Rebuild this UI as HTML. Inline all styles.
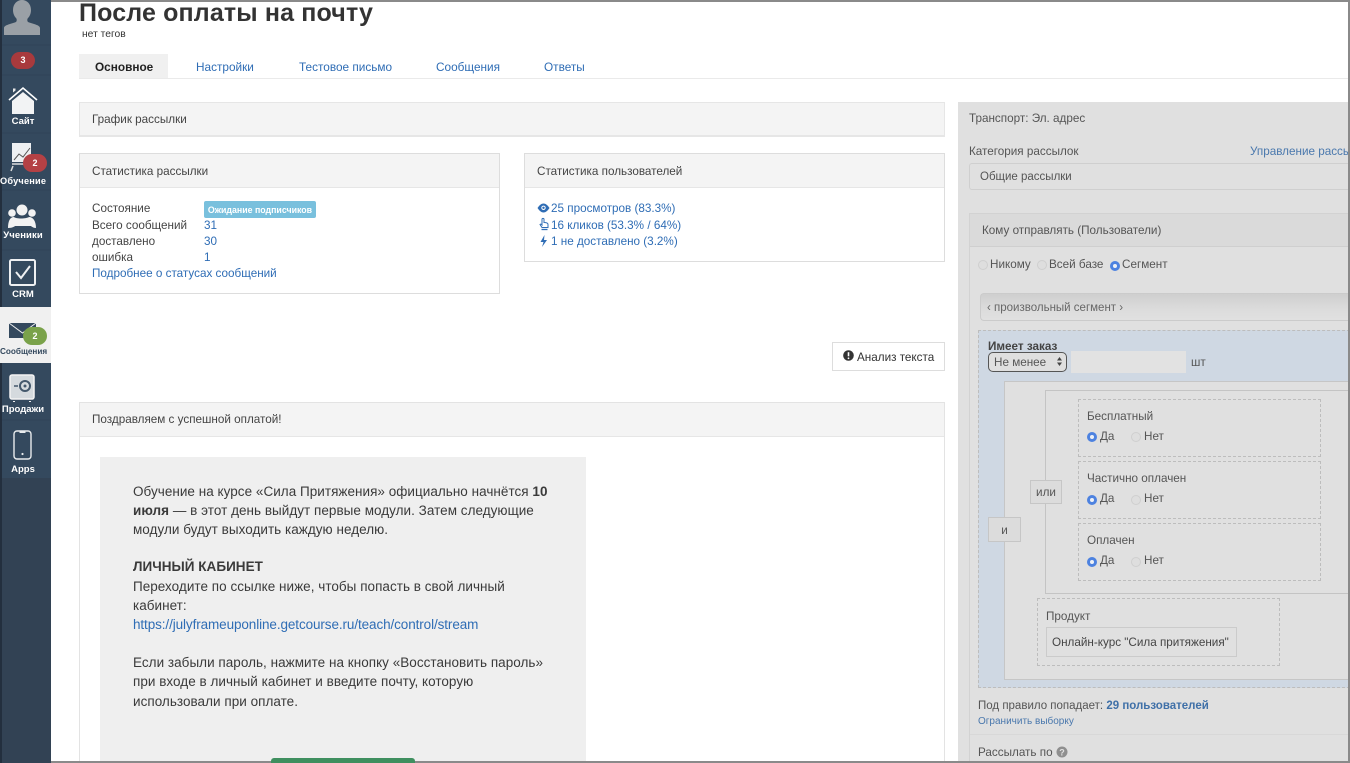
<!DOCTYPE html>
<html lang="ru"><head><meta charset="utf-8"><title>После оплаты на почту</title>
<style>
html,body{margin:0;padding:0;background:#fff;width:1350px;height:763px;overflow:hidden}
#p{position:relative;width:1350px;height:763px;overflow:hidden;background:#fff;font-family:"Liberation Sans",sans-serif;font-size:11.7px;color:#444}
#p div,#p span.a,#p a.a{position:absolute;white-space:nowrap}
a{color:#2f6db5;text-decoration:none}
.b{box-sizing:border-box}
.r{width:10px;height:10px;border-radius:50%;border:1px solid #cfcfcf;background:#dedede;box-sizing:border-box}
.s{width:10px;height:10px;border-radius:50%;border:3px solid #4d82e0;background:#eef1f6;box-sizing:border-box}
.n{color:#fff;font-weight:bold;font-size:9.5px;text-align:center;left:0;width:46px}
.g{color:#555}
.dash{border:1px dashed #bdbdbd;box-sizing:border-box}
.em{font-size:13.5px;color:#3a3a3a;left:133px;letter-spacing:.03px}
.t{font-size:11.8px}
</style></head><body><div id="p">

<!-- sidebar -->
<div style="left:0;top:0;width:51px;height:763px;background:#34495e"></div>
<div style="left:0;top:478px;width:51px;height:285px;background:#324254"></div>
<div style="left:0;top:0;width:1.500px;height:763px;background:#232f3e"></div>
<div style="left:0;top:307px;width:51px;height:56px;background:#f0f0f0"></div>
<svg style="position:absolute;left:0;top:0" width="51" height="480" viewBox="0 0 51 480">
<path d="M4 35V28c0-3 7-4 12-6 1-1 1-3 0-4-2-2-3-5-3-8 0-6 4-10 9-10s9 4 9 10c0 3-1 6-3 8-1 1-1 3 0 4 5 2 12 3 12 6v7z" fill="#9aa0a6"/>
<g stroke="#2e4155" stroke-width="1" opacity=".6"><path d="M2 45H51M2 75H51M2 133H51M2 190H51M2 250H51M2 420H51"/></g>
<path d="M9 100 23 88 37 100" fill="none" stroke="#fff" stroke-width="1.600"/>
<path d="M12 101 23 92 34 101V114H12z" fill="#f2f3f4"/><path d="M13 88.500h2.500v2l-2.500 2z" fill="#e8e8e8"/>
<path d="M12 143H31V162H12z" fill="#eef0f2"/><path d="M14 160 19 154 23 157 30 148" fill="none" stroke="#555" stroke-width="1"/><path d="M13 166 11 171M30 166 32 171M12 164H31" stroke="#ddd" stroke-width="1.500"/>
<circle cx="22" cy="210" r="5.500" fill="#f2f2f2"/><circle cx="12" cy="213" r="3.800" fill="#f2f2f2"/><circle cx="32" cy="213" r="3.800" fill="#f2f2f2"/>
<path d="M8 228c0-7 2-11 6-11 2 2 12 2 15 0 4 0 7 4 7 11-3 0-5-2-5-2H15s-2 2-7 2z" fill="#f2f2f2"/>
<rect x="10" y="260" width="25" height="25" rx="1.500" fill="#34495e" stroke="#eef0f2" stroke-width="2"/><path d="M16 272 21 278 30 266" fill="none" stroke="#eef0f2" stroke-width="2"/>
<path d="M9 323H36V338H9z" fill="#34495e"/><path d="M9 323 22.500 333 36 323" fill="none" stroke="#f0f0f0" stroke-width="1"/>
<rect x="10" y="375" width="24" height="24" rx="2" fill="#d5dade" stroke="#f3f3f3" stroke-width="1.500"/><circle cx="25" cy="386" r="5" fill="none" stroke="#44586c" stroke-width="2"/><circle cx="25" cy="386" r="1.500" fill="#44586c"/><path d="M14 386h4" stroke="#44586c" stroke-width="1.500"/><path d="M14 401v1M30 401v1" stroke="#eee" stroke-width="2"/>
<rect x="14" y="431" width="17" height="28" rx="3" fill="none" stroke="#e9ecee" stroke-width="1.400"/><path d="M19.500 432h6" stroke="#e9ecee" stroke-width="2"/><circle cx="22.500" cy="454" r="1.100" fill="#e9ecee"/>
</svg>
<div style="left:11px;top:52px;width:24px;height:17px;border-radius:9px;background:#a83a3d;color:#fff;font-size:9px;font-weight:bold;text-align:center;line-height:17px">3</div>
<div style="left:23px;top:154px;width:24px;height:18px;border-radius:9px;background:#b44145;color:#fff;font-size:9px;font-weight:bold;text-align:center;line-height:18px">2</div>
<div style="left:23px;top:327px;width:24px;height:18px;border-radius:9px;background:#7aa24a;color:#fff;font-size:9px;font-weight:bold;text-align:center;line-height:18px">2</div>
<div class="n" style="top:116px">Сайт</div>
<div class="n" style="top:176px;font-size:9.200px;letter-spacing:.2px">Обучение</div>
<div class="n" style="top:230px;letter-spacing:.1px">Ученики</div>
<div class="n" style="top:289px">CRM</div>
<div class="n" style="top:347px;font-size:8.200px;color:#34495e">Сообщения</div>
<div class="n" style="top:404px">Продажи</div>
<div class="n" style="top:464px">Apps</div>

<!-- header -->
<div style="left:79px;top:-3px;font-size:25px;font-weight:bold;color:#333;letter-spacing:.15px;line-height:32px">После оплаты на почту</div>
<div style="left:82px;top:29px;font-size:10.300px;color:#333;line-height:12px">нет тегов</div>
<div style="left:79px;top:54px;width:89px;height:24px;background:#f0f0f0"></div>
<div style="left:79px;top:78px;width:1271px;height:1px;background:#eaeaea"></div>
<div class="t" style="left:95px;top:59px;font-weight:bold;color:#222;line-height:16px">Основное</div>
<a class="a t" style="left:196px;top:59px;line-height:16px">Настройки</a>
<a class="a t" style="left:299px;top:59px;line-height:16px">Тестовое письмо</a>
<a class="a t" style="left:436px;top:59px;line-height:16px">Сообщения</a>
<a class="a t" style="left:544px;top:59px;line-height:16px">Ответы</a>

<!-- График -->
<div class="b" style="left:79px;top:102px;width:866px;height:35px;background:#f4f4f4;border:1px solid #e6e6e6;border-bottom-width:2px"></div>
<div style="left:92px;top:112px;line-height:16px">График рассылки</div>

<!-- Статистика рассылки -->
<div class="b" style="left:79px;top:153px;width:421px;height:141px;border:1px solid #ddd"></div>
<div class="b" style="left:80px;top:154px;width:419px;height:34px;background:#f4f4f4;border-bottom:1px solid #e6e6e6"></div>
<div style="left:92px;top:164px;line-height:16px">Статистика рассылки</div>
<div style="left:92px;top:201px;line-height:16px">Состояние</div>
<div style="left:92px;top:218px;line-height:16px">Всего сообщений</div>
<div style="left:92px;top:234px;line-height:16px">доставлено</div>
<div style="left:92px;top:250px;line-height:16px">ошибка</div>
<a class="a" style="left:92px;top:266px;line-height:16px">Подробнее о статусах сообщений</a>
<div style="left:204px;top:201px;width:112px;height:17px;border-radius:2px;background:#79c0dd;color:#fff;font-size:8.800px;font-weight:bold;text-align:center;line-height:18px">Ожидание подписчиков</div>
<a class="a" style="left:204px;top:218px;line-height:16px">31</a>
<a class="a" style="left:204px;top:234px;line-height:16px">30</a>
<a class="a" style="left:204px;top:250px;line-height:16px">1</a>

<!-- Статистика пользователей -->
<div class="b" style="left:524px;top:153px;width:421px;height:109px;border:1px solid #ddd"></div>
<div class="b" style="left:525px;top:154px;width:419px;height:34px;background:#f4f4f4;border-bottom:1px solid #e6e6e6"></div>
<div style="left:537px;top:164px;line-height:16px">Статистика пользователей</div>
<svg style="position:absolute;left:537px;top:202px" width="14" height="48" viewBox="0 0 14 48">
<path d="M.5 6C2.500 3 4.500 1.500 6.500 1.500S10.500 3 12.500 6C10.500 9 8.500 10.500 6.500 10.500S2.500 9 .5 6z" fill="#2f6db5"/><circle cx="6.500" cy="5.800" r="2.200" fill="#fff"/><circle cx="6.500" cy="5.800" r="1.200" fill="#2f6db5"/>
<path d="M5 17.500c0-1.500 2-1.500 2 0v3c2 0 4 .5 4 2v3H5L3 22.500c1-1 1.500 0 2 .5z" fill="none" stroke="#2f6db5" stroke-width="1"/><path d="M4.500 27.500h6" stroke="#2f6db5" stroke-width="1.300"/>
<path d="M7.500 33 3.500 40H6.500L5 45 10 38H7z" fill="#2f6db5"/></svg>
<a class="a" style="left:551px;top:201px;line-height:16px">25 просмотров (83.3%)</a>
<a class="a" style="left:551px;top:218px;line-height:16px">16 кликов (53.3% / 64%)</a>
<a class="a" style="left:551px;top:234px;line-height:16px">1 не доставлено (3.2%)</a>

<!-- Анализ -->
<div class="b" style="left:832px;top:342px;width:113px;height:29px;border:1px solid #ddd;background:#fff"></div>
<svg style="position:absolute;left:843px;top:350px" width="11" height="11" viewBox="0 0 11 11"><circle cx="5.500" cy="5.500" r="5.300" fill="#333"/><path d="M5.500 2.200V6.300" stroke="#fff" stroke-width="1.600"/><circle cx="5.500" cy="8.300" r=".9" fill="#fff"/></svg>
<div style="left:857px;top:350px;color:#333;line-height:16px">Анализ текста</div>

<!-- Письмо -->
<div class="b" style="left:79px;top:402px;width:866px;height:361px;border:1px solid #e3e3e3;border-bottom:0"></div>
<div class="b" style="left:80px;top:403px;width:864px;height:34px;background:#f4f4f4;border-bottom:1px solid #e6e6e6"></div>
<div style="left:92px;top:412px;line-height:16px">Поздравляем с успешной оплатой!</div>
<div style="left:100px;top:457px;width:486px;height:306px;background:#efefef"></div>
<div class="em" style="top:483px;line-height:18px">Обучение на курсе «Сила Притяжения» официально начнётся <b>10</b></div>
<div class="em" style="top:502px;line-height:18px"><b>июля</b> — в этот день выйдут первые модули. Затем следующие</div>
<div class="em" style="top:521px;line-height:18px">модули будут выходить каждую неделю.</div>
<div class="em" style="top:558px;line-height:18px;font-weight:bold">ЛИЧНЫЙ КАБИНЕТ</div>
<div class="em" style="top:578px;line-height:18px">Переходите по ссылке ниже, чтобы попасть в свой личный</div>
<div class="em" style="top:597px;line-height:18px">кабинет:</div>
<a class="a em" style="top:616px;line-height:18px;color:#2f6db5;letter-spacing:-.1px">https://julyframeuponline.getcourse.ru/teach/control/stream</a>
<div class="em" style="top:654px;line-height:18px">Если забыли пароль, нажмите на кнопку «Восстановить пароль»</div>
<div class="em" style="top:673px;line-height:18px">при входе в личный кабинет и введите почту, которую</div>
<div class="em" style="top:693px;line-height:18px">использовали при оплате.</div>

<!-- right panel -->
<div style="left:958px;top:102px;width:392px;height:661px;background:#e0e0e0"></div>
<div class="g" style="left:969px;top:111px;line-height:16px">Транспорт: Эл. адрес</div>
<div class="g" style="left:969px;top:144px;line-height:16px">Категория рассылок</div>
<div style="left:1250px;top:144px;width:100px;height:16px;overflow:hidden"><a style="line-height:16px;color:#4a78ad">Управление рассылками</a></div>
<div class="b" style="left:969px;top:163px;width:381px;height:27px;border:1px solid #cfcfcf;border-right:0;border-radius:3px 0 0 3px"></div>
<div class="g" style="left:980px;top:170px;font-size:11.500px;line-height:14px">Общие рассылки</div>

<div class="b" style="left:969px;top:213px;width:381px;height:550px;border:1px solid #d2d2d2;border-right:0;border-bottom:0"></div>
<div class="b" style="left:970px;top:214px;width:380px;height:33px;background:#dadada;border-bottom:1px solid #cfcfcf"></div>
<div class="g" style="left:982px;top:223px;line-height:16px">Кому отправлять (Пользователи)</div>
<div class="r" style="left:978px;top:260px"></div><div class="g" style="left:990px;top:257px;line-height:16px">Никому</div>
<div class="r" style="left:1037px;top:260px"></div><div class="g" style="left:1049px;top:257px;line-height:16px">Всей базе</div>
<div class="s" style="left:1110px;top:261px"></div><div class="g" style="left:1122px;top:257px;line-height:16px">Сегмент</div>

<div class="b" style="left:980px;top:293px;width:370px;height:28px;border:1px solid #cbcbcb;border-right:0;border-radius:4px 0 0 4px;background:linear-gradient(#cfcfcf,#dcdcdc 60%,#e0e0e0)"></div>
<div class="g" style="left:987px;top:301px;font-size:11.500px;line-height:14px;color:#666">‹ произвольный сегмент ›</div>

<div class="dash" style="left:978px;top:330px;width:372px;height:358px;background:#cfd8e3;border-right:0"></div>
<div style="left:988px;top:339px;font-weight:bold;color:#444;line-height:15px">Имеет заказ</div>
<div class="b" style="left:988px;top:352px;width:79px;height:20px;border:1px solid #555;border-radius:5px;background:#dfdfdf"></div>
<div class="g" style="left:994px;top:355px;line-height:16px">Не менее</div>
<svg style="position:absolute;left:1056px;top:356px" width="7" height="11" viewBox="0 0 7 11"><path d="M3.500 1 6 4.500H1zM3.500 10 6 6.500H1z" fill="#444"/></svg>
<div style="left:1071px;top:351px;width:115px;height:22px;background:#e2e2e2"></div>
<div class="g" style="left:1191px;top:355px;line-height:16px">шт</div>

<div class="b" style="left:1004px;top:381px;width:346px;height:299px;background:#e0e0e0;border:1px solid #c6c6c6;border-right:0"></div>
<div class="b" style="left:1045px;top:390px;width:305px;height:204px;border:1px solid #c4c4c4;border-right:0"></div>
<div class="dash" style="left:1078px;top:399px;width:243px;height:58px"></div>
<div class="dash" style="left:1078px;top:461px;width:243px;height:58px"></div>
<div class="dash" style="left:1078px;top:523px;width:243px;height:58px"></div>
<div class="g" style="left:1087px;top:409px;line-height:16px">Бесплатный</div>
<div class="s" style="left:1087px;top:432px"></div><div class="g" style="left:1100px;top:429px;line-height:16px">Да</div>
<div class="r" style="left:1131px;top:432px"></div><div class="g" style="left:1144px;top:429px;line-height:16px">Нет</div>
<div class="g" style="left:1087px;top:471px;line-height:16px">Частично оплачен</div>
<div class="s" style="left:1087px;top:495px"></div><div class="g" style="left:1100px;top:491px;line-height:16px">Да</div>
<div class="r" style="left:1131px;top:495px"></div><div class="g" style="left:1144px;top:491px;line-height:16px">Нет</div>
<div class="g" style="left:1087px;top:533px;line-height:16px">Оплачен</div>
<div class="s" style="left:1087px;top:557px"></div><div class="g" style="left:1100px;top:553px;line-height:16px">Да</div>
<div class="r" style="left:1131px;top:557px"></div><div class="g" style="left:1144px;top:553px;line-height:16px">Нет</div>
<div class="b g" style="left:1030px;top:480px;width:32px;height:24px;background:#dcdcdc;border:1px solid #c6c6c6;text-align:center;line-height:23px">или</div>
<div class="b g" style="left:988px;top:517px;width:33px;height:25px;background:#dcdcdc;border:1px solid #c6c6c6;text-align:center;line-height:25px">и</div>
<div class="dash" style="left:1037px;top:598px;width:243px;height:68px"></div>
<div class="g" style="left:1046px;top:609px;line-height:16px">Продукт</div>
<div class="b" style="left:1046px;top:627px;width:191px;height:30px;border:1px solid #cbcbcb;color:#444;padding-left:5px;line-height:29px">Онлайн-курс "Сила притяжения"</div>

<div class="g" style="left:978px;top:698px;font-size:11.500px;line-height:16px">Под правило попадает: <b style="color:#3f70a8">29 пользователей</b></div>
<a class="a" style="left:978px;top:716px;font-size:10px;line-height:12px;color:#4a78ad">Ограничить выборку</a>
<div style="left:970px;top:734px;width:380px;height:1px;background:#d8d8d8"></div>
<div class="g" style="left:978px;top:745px;line-height:16px">Рассылать по</div>
<svg style="position:absolute;left:1056px;top:746px" width="12" height="12" viewBox="0 0 12 12"><circle cx="6" cy="6" r="5.500" fill="#8f8f8f"/><text x="6" y="9.300" font-size="9" font-weight="bold" text-anchor="middle" fill="#e0e0e0" font-family="Liberation Sans">?</text></svg>

<!-- frame -->
<div style="left:51px;top:0;width:1299px;height:1.500px;background:#8a8a8a"></div>
<div style="left:1348px;top:0;width:2px;height:763px;background:#8a8a8a"></div>
<div style="left:51px;top:761px;width:1299px;height:2px;background:#8a8a8a"></div>
<div style="left:271px;top:758px;width:144px;height:5px;border-radius:3px 3px 0 0;background:#3f8f5f"></div>
</div></body></html>
